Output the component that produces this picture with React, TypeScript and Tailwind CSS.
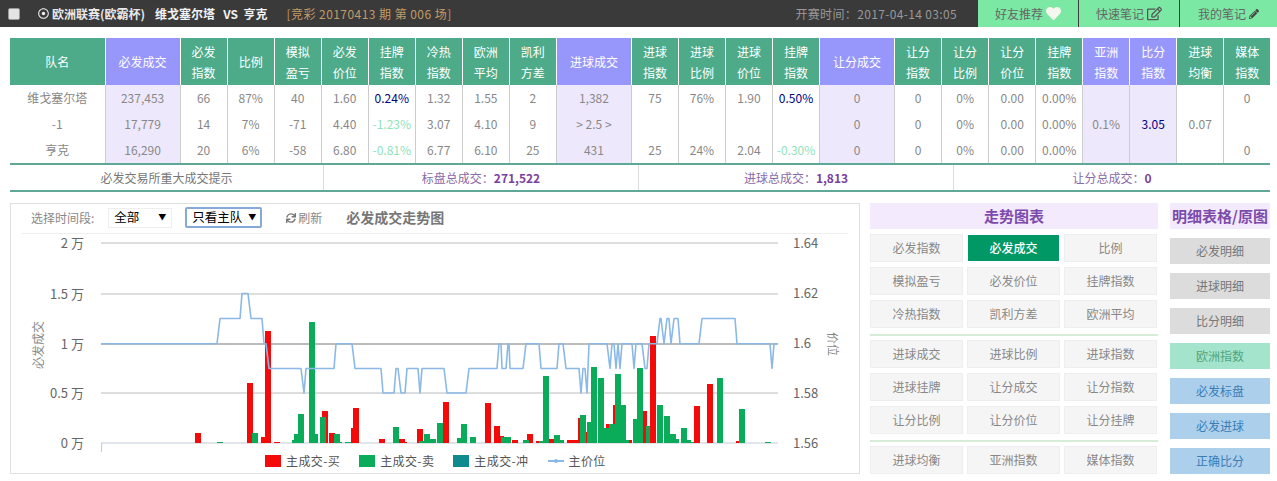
import { FaHeart, FaPencilAlt, FaRegDotCircle, FaRegEdit, FaSync } from "react-icons/fa";

type Col = { label: string[]; purple?: boolean; width: string };

const columns: Col[] = [
  { label: ["队名"], width: "w-[95px]" },
  { label: ["必发成交"], purple: true, width: "w-[75px]" },
  { label: ["必发", "指数"], width: "w-[47px]" },
  { label: ["比例"], width: "w-[47px]" },
  { label: ["模拟", "盈亏"], width: "w-[47px]" },
  { label: ["必发", "价位"], width: "w-[47px]" },
  { label: ["挂牌", "指数"], width: "w-[47px]" },
  { label: ["冷热", "指数"], width: "w-[47px]" },
  { label: ["欧洲", "平均"], width: "w-[47px]" },
  { label: ["凯利", "方差"], width: "w-[47px]" },
  { label: ["进球成交"], purple: true, width: "w-[75px]" },
  { label: ["进球", "指数"], width: "w-[47px]" },
  { label: ["进球", "比例"], width: "w-[47px]" },
  { label: ["进球", "价位"], width: "w-[47px]" },
  { label: ["挂牌", "指数"], width: "w-[47px]" },
  { label: ["让分成交"], purple: true, width: "w-[75px]" },
  { label: ["让分", "指数"], width: "w-[47px]" },
  { label: ["让分", "比例"], width: "w-[47px]" },
  { label: ["让分", "价位"], width: "w-[47px]" },
  { label: ["挂牌", "指数"], width: "w-[47px]" },
  { label: ["亚洲", "指数"], purple: true, width: "w-[47px]" },
  { label: ["比分", "指数"], purple: true, width: "w-[47px]" },
  { label: ["进球", "均衡"], width: "w-[47px]" },
  { label: ["媒体", "指数"], width: "w-[46px]" },
];

const rows = [
  ["维戈塞尔塔", "237,453", "66", "87%", "40", "1.60", "0.24%", "1.32", "1.55", "2", "1,382", "75", "76%", "1.90", "0.50%", "0", "0", "0%", "0.00", "0.00%", "", "", "", "0"],
  ["-1", "17,779", "14", "7%", "-71", "4.40", "-1.23%", "3.07", "4.10", "9", "> 2.5 >", "", "", "", "", "0", "0", "0%", "0.00", "0.00%", "0.1%", "3.05", "0.07", ""],
  ["亨克", "16,290", "20", "6%", "-58", "6.80", "-0.81%", "6.77", "6.10", "25", "431", "25", "24%", "2.04", "-0.30%", "0", "0", "0%", "0.00", "0.00%", "", "", "", "0"],
];

function cellColor(value: string, col: number) {
  if (col === 21) return "text-[#000080]";
  if (col === 6 || col === 14) {
    return value.startsWith("-") ? "text-[#8fe3b8]" : "text-[#000080]";
  }
  return "text-[#888]";
}

const trendGroups = [
  ["必发指数", "必发成交", "比例", "模拟盈亏", "必发价位", "挂牌指数", "冷热指数", "凯利方差", "欧洲平均"],
  ["进球成交", "进球比例", "进球指数", "进球挂牌", "让分成交", "让分指数", "让分比例", "让分价位", "让分挂牌"],
  ["进球均衡", "亚洲指数", "媒体指数"],
];

const detailButtons = [
  { label: "必发明细", className: "bg-[#dcdcdc] text-[#777]" },
  { label: "进球明细", className: "bg-[#dcdcdc] text-[#777]" },
  { label: "比分明细", className: "bg-[#dcdcdc] text-[#777]" },
  { label: "欧洲指数", className: "bg-[#a5e4cc] text-[#4fa67f]" },
  { label: "必发标盘", className: "bg-[#acd0ec] text-[#3a7db5]" },
  { label: "必发进球", className: "bg-[#acd0ec] text-[#3a7db5]" },
  { label: "正确比分", className: "bg-[#acd0ec] text-[#3a7db5]" },
];

// chart coords are page x/y minus the svg origin (12, 234)
const X0 = 12;
const Y0 = 234;
const BASE = 443;

// [left x, top y, width]
const redBars = [
  [196, 433, 6], [248, 383, 6], [262, 437, 6], [266, 331, 6], [275, 442, 6], [323, 411, 6], [330, 433, 6],
  [352, 428, 6], [354, 408, 6], [380, 439, 6], [400, 439, 6], [404, 442, 4], [418, 429, 6], [444, 402, 6],
  [486, 403, 6], [495, 426, 6], [501, 436, 4], [513, 440, 6], [528, 434, 6], [537, 441, 5], [550, 439, 5],
  [568, 440, 12], [579, 418, 6], [587, 432, 2], [607, 424, 4], [614, 405, 3], [630, 440, 3], [644, 411, 4],
  [695, 406, 6], [708, 384, 6], [737, 441, 3],
];
const greenBars = [
  [218, 442, 6], [253, 433, 6], [293, 440, 6], [295, 434, 6], [299, 414, 6], [310, 322, 6], [314, 434, 5],
  [321, 417, 6], [335, 434, 6], [339, 442, 4], [346, 442, 6], [394, 427, 6], [420, 441, 5], [425, 434, 6],
  [431, 439, 6], [438, 423, 6], [458, 438, 6], [462, 424, 6], [471, 437, 6], [502, 437, 10], [524, 440, 6],
  [544, 376, 6], [540, 441, 5], [555, 435, 6], [560, 440, 5], [581, 415, 6], [588, 422, 4], [592, 367, 6],
  [599, 378, 6], [604, 428, 6], [610, 424, 6], [616, 374, 6], [621, 405, 6], [627, 440, 3], [634, 419, 6],
  [638, 368, 6], [647, 426, 6], [658, 405, 6], [665, 416, 6], [670, 434, 7], [677, 439, 3], [682, 428, 6],
  [688, 440, 4], [692, 442, 3], [718, 378, 6], [740, 409, 6], [766, 442, 6],
];

const L = { a: 293.5, b: 318.5, c: 343.7, d: 368.5, e: 393 };
const linePoints: [number, number][] = [
  [102, L.c], [218, L.c], [221, L.b], [241, L.b], [243, L.a], [249, L.a], [252, L.b], [263, L.b], [265, L.c],
  [267, L.c], [270, L.d], [302, L.d], [305, L.e], [307, L.d], [335, L.d], [337, L.c], [353, L.c], [356, L.d],
  [382, L.d], [384, L.e], [395, L.e], [397, L.d], [399, L.d], [402, L.e], [406, L.e], [408, L.d], [419, L.d],
  [421, L.e], [423, L.d], [445, L.d], [448, L.e], [467, L.e], [470, L.d], [498, L.d], [500, L.c], [502, L.c],
  [503, L.d], [507, L.d], [509, L.c], [510, L.c], [511, L.d], [524, L.d], [527, L.c], [540, L.c], [542, L.d],
  [558, L.d], [560, L.c], [564, L.c], [567, L.d], [580, L.d], [582, L.e], [584, L.d], [586, L.d],
  [588, L.e], [590, L.c], [608, L.c], [611, L.d], [613, L.c], [615, L.c], [617, L.d], [619, L.c], [621, L.d],
  [623, L.c], [633, L.c], [635, L.d], [637, L.c], [643, L.c], [646, L.d], [648, L.d], [650, L.c], [658, L.c],
  [661, L.b], [662, L.b], [665, L.c], [668, L.b], [670, L.b], [672, L.c], [675, L.b], [679, L.b], [681, L.c],
  [700, L.c], [703, L.b], [736, L.b], [738, L.c], [771, L.c], [773, L.d], [775, L.c], [778, L.c],
];

const leftTicks = [
  { y: 243, label: "2 万" },
  { y: 294, label: "1.5 万" },
  { y: 344, label: "1 万" },
  { y: 393, label: "0.5 万" },
  { y: 443, label: "0 万" },
];
const rightTicks = [
  { y: 243, label: "1.64" },
  { y: 293, label: "1.62" },
  { y: 343, label: "1.6" },
  { y: 393, label: "1.58" },
  { y: 443, label: "1.56" },
];

function Chart() {
  return (
    <svg width="846" height="219" viewBox="0 0 846 219" className="block">
      <g transform={`translate(${-X0} ${-Y0})`} fontSize="13" fill="#666">
        {leftTicks.slice(0, 4).map((t) => (
          <line key={t.y} x1="102" x2="779" y1={t.y} y2={t.y} stroke="#bcbcbc" strokeWidth={t.y === 344 ? 2 : 1} />
        ))}
        <line x1="102" x2="779" y1={BASE} y2={BASE} stroke="#c3ccd8" />
        <line x1="102.5" x2="102.5" y1={BASE} y2="452" stroke="#c3ccd8" />
        {redBars.map(([x, y, w]) => (
          <rect key={`r${x}`} x={x} y={y} width={w} height={BASE - y} fill="#f50a0a" />
        ))}
        {greenBars.map(([x, y, w]) => (
          <rect key={`g${x}`} x={x} y={y} width={w} height={BASE - y} fill="#0aac5a" />
        ))}
        <rect x="651" y="336" width="6" height={BASE - 336} fill="#f50a0a" />
        <polyline
          points={linePoints.map(([x, y]) => `${x},${y}`).join(" ")}
          fill="none"
          stroke="#8ab9e8"
          strokeWidth="1.6"
          strokeLinejoin="round"
        />
        {leftTicks.map((t) => (
          <text key={t.y} x="85" y={t.y + 5} textAnchor="end">
            {t.label}
          </text>
        ))}
        {rightTicks.map((t) => (
          <text key={t.y} x="794" y={t.y + 5}>
            {t.label}
          </text>
        ))}
        <text transform="translate(44 345) rotate(-90)" textAnchor="middle" fontSize="12" fill="#888">
          必发成交
        </text>
        <text transform="translate(829 344) rotate(90)" textAnchor="middle" fontSize="12" fill="#888">
          价位
        </text>
      </g>
    </svg>
  );
}

function LegendItem({ color, label }: { color: string; label: string }) {
  return (
    <div className="flex items-center gap-[5px]">
      <span className={`h-3 w-4 ${color}`} />
      <span>{label}</span>
    </div>
  );
}

export default function App() {
  return (
    <div className="h-[481px] w-[1277px] overflow-hidden bg-white font-['Noto_Sans_CJK_SC','Noto_Sans',sans-serif] text-xs text-[#888]">
      <div className="flex h-[27px] items-center bg-[#3a3a3a]">
        <span className="ml-2 h-3 w-3 rounded-[2px] border border-[#999] bg-[#e4e4e4]" />
        <FaRegDotCircle className="ml-[18px] text-[11px] text-[#eee]" />
        <span className="ml-[3px] font-bold text-[#e8e8e8]">欧洲联赛(欧霸杯)</span>
        <span className="ml-[10px] font-bold text-[#f2f2f2]">维戈塞尔塔&nbsp;&nbsp;&nbsp;VS&nbsp;&nbsp;亨克</span>
        <span className="ml-[19px] tracking-[0.45px] text-[#c19a66]">[竞彩 20170413 期 第 006 场]</span>
        <span className="ml-auto mr-[21px] tracking-[0.35px] text-[#999]">开赛时间：2017-04-14 03:05</span>
        <div className="flex h-full w-[299px] gap-px text-[#666]">
          <div className="flex w-[100px] items-center justify-center gap-[3px] bg-[#7be8a4]">
            好友推荐 <FaHeart className="text-[15px] text-[#f6f8ee]" />
          </div>
          <div className="flex w-[100px] items-center justify-center gap-[3px] bg-[#7be8a4]">
            快速笔记 <FaRegEdit className="text-[15px] text-[#555]" />
          </div>
          <div className="flex w-[97px] items-center justify-center gap-[3px] bg-[#7be8a4]">
            我的笔记 <FaPencilAlt className="text-[10px] text-[#444]" />
          </div>
        </div>
      </div>

      <div className="ml-[10px] mt-[11px] w-[1260px]">
        <table className="w-full table-fixed border-collapse text-center">
          <thead>
            <tr className="h-[47px] text-white">
              {columns.map((col, i) => (
                <th
                  key={i}
                  className={`${col.width} border-r border-white p-0 font-normal leading-[21px] last:border-r-0 ${
                    col.purple ? "bg-[#9797fb]" : "bg-[#4dab8a]"
                  }`}
                >
                  {col.label.map((line) => (
                    <div key={line}>{line}</div>
                  ))}
                </th>
              ))}
            </tr>
          </thead>
          <tbody>
            {rows.map((row, r) => (
              <tr key={r} className="h-[26px]">
                {row.map((value, c) => (
                  <td
                    key={c}
                    className={`overflow-hidden whitespace-nowrap border-r border-[#ccc] p-0 pb-px last:border-r-0 ${cellColor(value, c)} ${
                      columns[c].purple ? "bg-[#eee8fc]" : ""
                    }`}
                  >
                    {value}
                  </td>
                ))}
              </tr>
            ))}
          </tbody>
        </table>
        <div className="grid h-[29px] grid-cols-[314px_315px_315px_316px] border-y-2 border-[#5fa898] text-center leading-[25px]">
          <div className="border-r border-[#ddd] text-[#777]">必发交易所重大成交提示</div>
          <div className="border-r border-[#ddd] text-[#8a6aa8]">
            标盘总成交：<b className="text-[#7b3f9e]">271,522</b>
          </div>
          <div className="border-r border-[#ddd] text-[#8a6aa8]">
            进球总成交：<b className="text-[#7b3f9e]">1,813</b>
          </div>
          <div className="text-[#8a6aa8]">
            让分总成交：<b className="text-[#7b3f9e]">0</b>
          </div>
        </div>
      </div>

      <div className="ml-[10px] mt-[11px] flex items-start">
        <section className="h-[271px] w-[850px] border border-[#e0e0e0]">
          <div className="mx-[11px] flex h-[30px] items-center border-b border-[#eee] pb-[2px]">
            <span className="ml-[9px] text-[#888]">选择时间段:</span>
            <div className="ml-[14px] flex h-[20px] w-[64px] items-center justify-between whitespace-nowrap border border-[#eee] pl-[5px] pr-[5px] text-[12.5px] text-black">
              全部 <span className="text-[8px]">▼</span>
            </div>
            <div className="ml-[13px] flex h-[21px] w-[77px] items-center justify-between whitespace-nowrap rounded-[2px] border-2 border-[#86a9d8] pl-[5px] pr-[4px] text-[12.5px] text-black">
              只看主队 <span className="text-[8px]">▼</span>
            </div>
            <FaSync className="ml-[24px] text-[10px] text-[#777]" />
            <span className="ml-[2px] text-[#888]">刷新</span>
            <b className="ml-[24px] text-[14px] text-[#777]">必发成交走势图</b>
          </div>
          <Chart />
          <div className="ml-[254px] flex gap-[19px] tracking-[0.4px] text-[#555]">
            <LegendItem color="bg-[#f50a0a]" label="主成交-买" />
            <LegendItem color="bg-[#0aac5a]" label="主成交-卖" />
            <LegendItem color="bg-[#0f8a8e]" label="主成交-冲" />
            <div className="flex items-center gap-[5px]">
              <span className="relative h-[2px] w-4 bg-[#8ab9e8]">
                <span className="absolute left-[6px] top-[-1px] h-1 w-1 rounded-full bg-[#8ab9e8]" />
              </span>
              <span>主价位</span>
            </div>
          </div>
        </section>

        <section className="ml-[10px] w-[288px]">
          <div className="h-[26px] bg-[#f3eafd] text-center text-[15px] font-bold leading-[26px] text-[#7d4bab]">走势图表</div>
          {trendGroups.map((group, g) => (
            <div key={g}>
              {g > 0 && <div className="mb-[4px] mt-[6px] h-[2px] bg-[#d5ecd9]" />}
              <div className={`grid grid-cols-[93px_93px_93px] gap-x-1 gap-y-[5px] ${g === 0 ? "mt-[5px]" : ""}`}>
                {group.map((label) =>
                  label === "必发成交" && g === 0 ? (
                    <div key={label} className="m-px flex h-[26px] items-center justify-center bg-[#009966] font-medium text-white">
                      {label}
                    </div>
                  ) : (
                    <div key={label} className="flex h-[28px] items-center justify-center border border-[#eee] bg-[#f5f5f5]">
                      {label}
                    </div>
                  ),
                )}
              </div>
            </div>
          ))}
        </section>

        <section className="ml-[12px] w-[100px]">
          <div className="mb-[9px] h-[26px] whitespace-nowrap bg-[#f3eafd] text-center text-[15px] font-bold leading-[26px] text-[#7d4bab]">明细表格/原图</div>
          <div className="flex flex-col gap-[9px]">
            {detailButtons.map((b) => (
              <div key={b.label} className={`flex h-[26px] items-center justify-center ${b.className}`}>
                {b.label}
              </div>
            ))}
          </div>
        </section>
      </div>
    </div>
  );
}
